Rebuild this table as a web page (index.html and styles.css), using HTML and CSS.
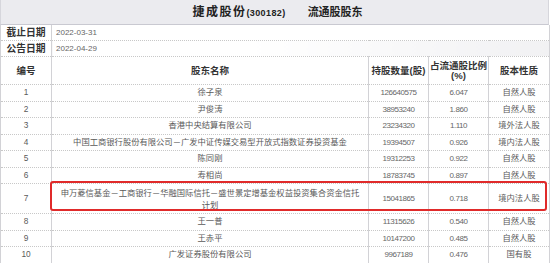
FILE: index.html
```html
<!DOCTYPE html>
<html lang="zh-CN">
<head>
<meta charset="utf-8">
<title>捷成股份 流通股股东</title>
<link rel="stylesheet" href="styles.css">
</head>
<body>
<div class="panel">
  <div class="title"><span class="t-name">捷成股份</span><span class="t-code">(300182)</span><span class="t-sub">流通股股东</span></div>
  <table class="grid">
    <colgroup><col class="c-no"><col class="c-name"><col class="c-qty"><col class="c-pct"><col class="c-type"></colgroup>
    <tbody>
      <tr class="info"><th>截止日期</th><td colspan="4">2022-03-31</td></tr>
      <tr class="info alt"><th>公告日期</th><td colspan="4">2022-04-29</td></tr>
      <tr class="head"><th>编号</th><th>股东名称</th><th>持股数量(股)</th><th>占流通股比例<br>(%)</th><th>股本性质</th></tr>
      <tr class="row"><td>1</td><td>徐子泉</td><td class="num">126640575</td><td class="num">6.047</td><td>自然人股</td></tr>
      <tr class="row"><td>2</td><td>尹俊涛</td><td class="num">38953240</td><td class="num">1.860</td><td>自然人股</td></tr>
      <tr class="row"><td>3</td><td>香港中央结算有限公司</td><td class="num">23234320</td><td class="num">1.110</td><td>境外法人股</td></tr>
      <tr class="row"><td>4</td><td>中国工商银行股份有限公司－广发中证传媒交易型开放式指数证券投资基金</td><td class="num">19394507</td><td class="num">0.926</td><td>境内法人股</td></tr>
      <tr class="row"><td>5</td><td>陈同刚</td><td class="num">19312253</td><td class="num">0.922</td><td>自然人股</td></tr>
      <tr class="row"><td>6</td><td>寿相尚</td><td class="num">18783745</td><td class="num">0.897</td><td>自然人股</td></tr>
      <tr class="row tall"><td>7</td><td class="wrap">申万菱信基金－工商银行－华融国际信托－盛世景定增基金权益投资集合资金信托计划</td><td class="num">15041865</td><td class="num">0.718</td><td>境内法人股</td></tr>
      <tr class="row"><td>8</td><td>王一普</td><td class="num">11315626</td><td class="num">0.540</td><td>自然人股</td></tr>
      <tr class="row"><td>9</td><td>王赤平</td><td class="num">10147200</td><td class="num">0.485</td><td>自然人股</td></tr>
      <tr class="row"><td>10</td><td>广发证券股份有限公司</td><td class="num">9967189</td><td class="num">0.476</td><td>国有股</td></tr>
    </tbody>
  </table>
  <div class="mark"></div>
</div>
</body>
</html>
```

FILE: styles.css
```css
html, body {
  margin: 0;
  padding: 0;
  background: #fff;
}

body {
  font-family: "Liberation Sans", "Noto Sans CJK SC", sans-serif;
  color: #5a5a5a;
}

.panel {
  position: relative;
  width: 549px;
}

.title {
  box-sizing: border-box;
  height: 25px;
  background: #ebebef;
  border-left: 1px solid #d6d6dc;
  border-right: 1px solid #d6d6dc;
  border-bottom: 1px solid #c9c9d1;
  text-align: center;
  line-height: 24px;
  font-weight: bold;
  font-size: 12px;
  color: #222;
  padding-left: 6px;
}

.t-name {
  letter-spacing: 1.5px;
}

.t-code {
  font-size: 9px;
  letter-spacing: 0.4px;
}

.t-sub {
  margin-left: 22px;
  font-size: 11px;
  letter-spacing: 0;
}

.grid {
  border-collapse: collapse;
  table-layout: fixed;
  width: 549px;
}

.c-no { width: 51px; }
.c-name { width: 317px; }
.c-qty { width: 60px; }
.c-pct { width: 60px; }
.c-type { width: 61px; }

.grid th,
.grid td {
  padding: 0;
  border-left: 1px solid #d2d2d6;
  border-right: 1px solid #d2d2d6;
  border-bottom: 1px dotted #c8c8c8;
  text-align: center;
  vertical-align: middle;
  font-size: 8.3px;
  line-height: 11px;
  white-space: nowrap;
  overflow: hidden;
}

.grid th {
  font-weight: bold;
  color: #333;
  font-size: 9.5px;
}

.info th,
.info td {
  height: 15px;
}

.info th {
  font-size: 9.8px;
}

.info td {
  text-align: left;
  padding-left: 4px;
  font-size: 8px;
  color: #666;
}

.info.alt td {
  background: linear-gradient(to right, #fff 40%, #f1f1f3 100%);
}

.head th {
  height: 27px;
  line-height: 10px;
}

.row td {
  height: 15.5px;
}

.row td.num {
  font-size: 8px;
  letter-spacing: -0.45px;
  color: #666;
}

.row.tall td {
  height: 29px;
}

.row td.wrap {
  white-space: normal;
  padding: 0 7px;
  line-height: 12px;
}

.mark {
  position: absolute;
  left: 50px;
  top: 181px;
  width: 497px;
  height: 30px;
  box-sizing: border-box;
  border: 2px solid #e02a2a;
  border-radius: 3px;
}
```
